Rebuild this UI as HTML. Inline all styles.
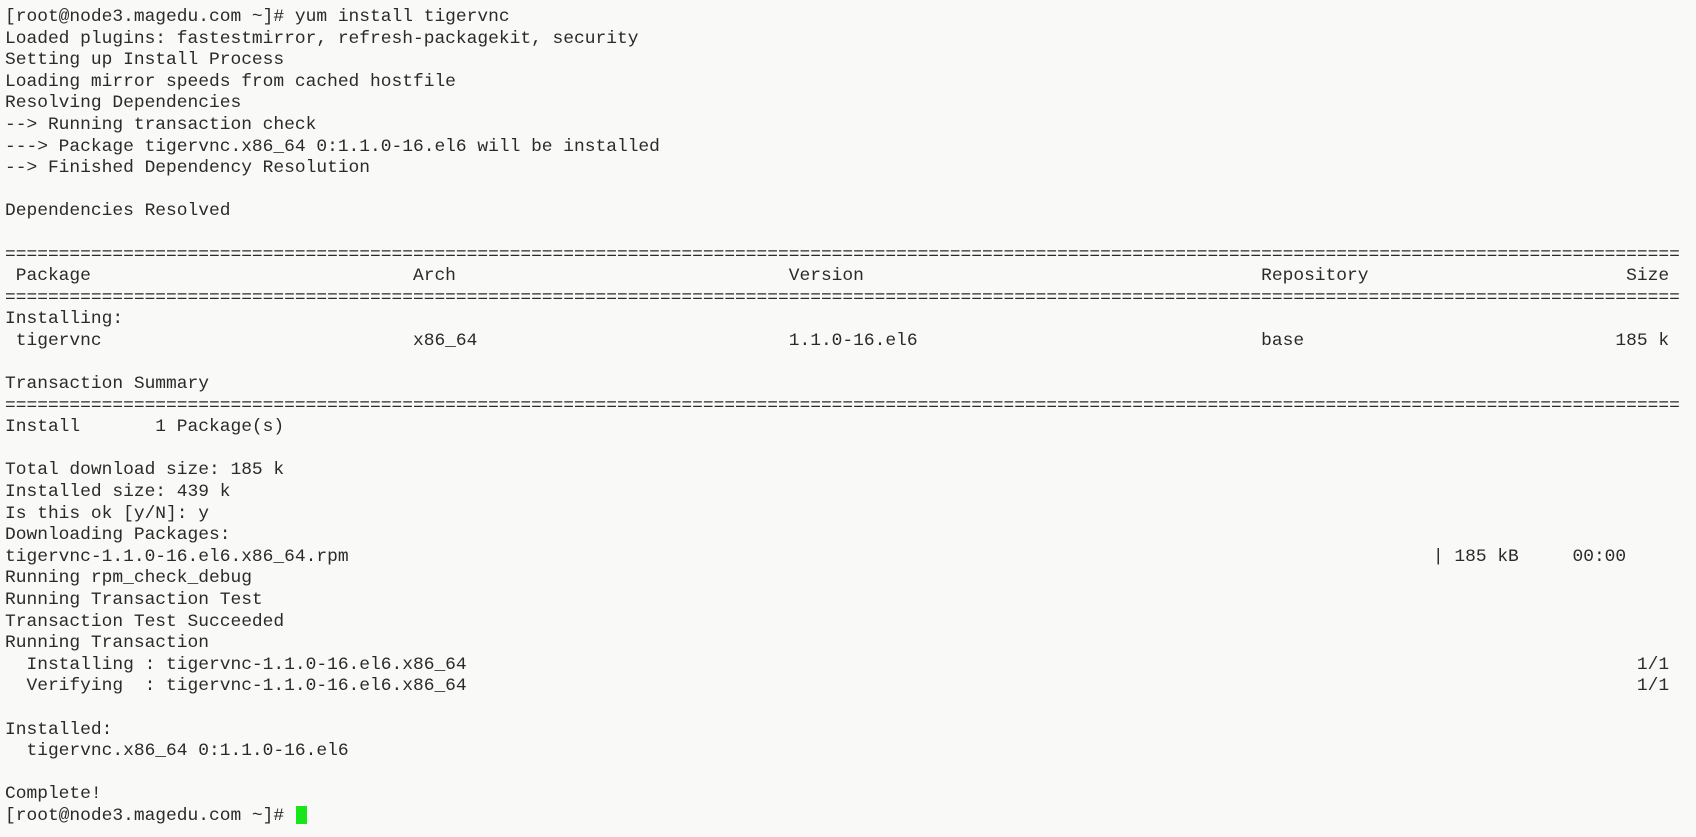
<!DOCTYPE html>
<html><head><meta charset="utf-8"><style>
html,body{margin:0;padding:0;background:#f9f9f8;width:1696px;height:837px;overflow:hidden}
pre{margin:0;position:absolute;left:5px;top:7px;font-family:"Liberation Mono",monospace;font-size:17.9px;line-height:21.6px;color:#2a2a2a;white-space:pre}
.cur{position:absolute;left:296px;top:806px;width:11px;height:18px;background:#19e619}
</style></head><body>
<pre>[root@node3.magedu.com ~]# yum install tigervnc
Loaded plugins: fastestmirror, refresh-packagekit, security
Setting up Install Process
Loading mirror speeds from cached hostfile
Resolving Dependencies
--&gt; Running transaction check
---&gt; Package tigervnc.x86_64 0:1.1.0-16.el6 will be installed
--&gt; Finished Dependency Resolution

Dependencies Resolved

============================================================================================================================================================
 Package                              Arch                               Version                                     Repository                        Size
============================================================================================================================================================
Installing:
 tigervnc                             x86_64                             1.1.0-16.el6                                base                             185 k

Transaction Summary
============================================================================================================================================================
Install       1 Package(s)

Total download size: 185 k
Installed size: 439 k
Is this ok [y/N]: y
Downloading Packages:
tigervnc-1.1.0-16.el6.x86_64.rpm                                                                                                     | 185 kB     00:00
Running rpm_check_debug
Running Transaction Test
Transaction Test Succeeded
Running Transaction
  Installing : tigervnc-1.1.0-16.el6.x86_64                                                                                                             1/1
  Verifying  : tigervnc-1.1.0-16.el6.x86_64                                                                                                             1/1

Installed:
  tigervnc.x86_64 0:1.1.0-16.el6

Complete!
[root@node3.magedu.com ~]# </pre>
<div class="cur"></div>
</body></html>
